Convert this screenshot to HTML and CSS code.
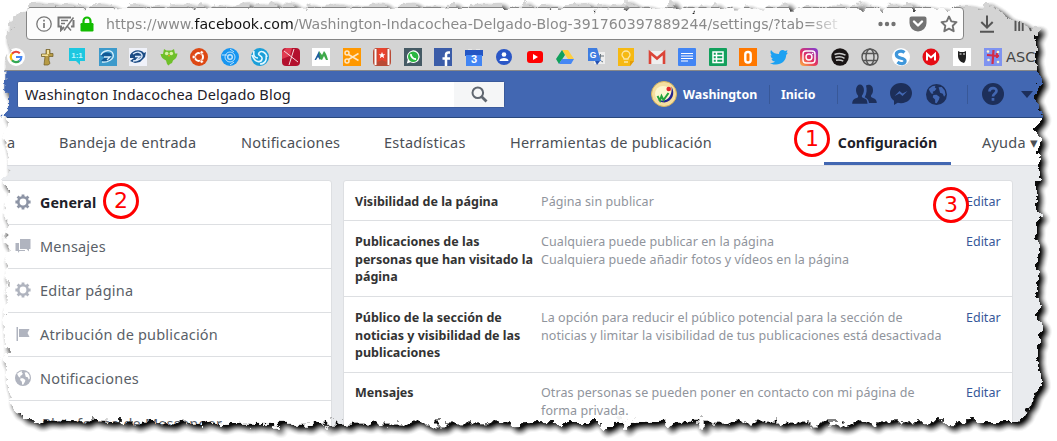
FILE: index.html
```html
<!DOCTYPE html>
<html lang="es">
<head>
<meta charset="utf-8">
<title>Configuración</title>
<link rel="stylesheet" href="styles.css">
</head>
<body>
<svg class="defs" width="0" height="0">
  <symbol id="gear" viewBox="0 0 16 16"><g fill="none" stroke="currentColor"><circle cx="8" cy="8" r="4.700" stroke-width="2.600"/><path stroke-width="2.800" d="M8 .4v3M8 12.600v3M.4 8h3M12.600 8h3M2.600 2.600l2 2M11.400 11.400l2 2M13.400 2.600l-2 2M4.600 11.400l-2 2"/></g></symbol>
  <symbol id="globe" viewBox="0 0 20 20"><circle cx="10" cy="10" r="10" fill="currentColor"/><path class="land" d="M2.600 4.800 6 2.200 9 1.600 8.400 3.400 10 4.600 8.200 6.600 6.400 7.400 7 9.400 5 9 3.600 7zM7 10.400l3-.2 3 2.200-.6 2.400-2.200 3.600-1.400-.4-.2-3.200L6.400 12.600zM12 3.200l3-.4 2.800 3.400.8 4-1.400 2-1.200-3-2.600-.8-.6-2.400z"/></symbol>
</svg>
<div class="screen">
  <header class="toolbar">
    <div class="urlbar">
      <svg width="16" height="16" viewBox="0 0 16 16" fill="none" stroke="#777"><circle cx="8" cy="8" r="7.200" stroke-width="1.300"/><path stroke-width="1.700" d="M8 7v5M8 3.700v1.800"/></svg>
      <svg width="18" height="16" viewBox="0 0 18 16" fill="none" stroke="#777" stroke-width="2"><path d="M14 1.500H1.500v9H4V14l3-3M16.500 4v6.500H14"/><path stroke-width="1.500" d="M4 4.500h7M4 7.500h4M16.500 1.500 7 14.500M10.500 10.500l3.500 4"/></svg>
      <svg width="14" height="16" viewBox="0 0 14 16"><path d="M3.500 8V5a3.500 3.500 0 0 1 7 0v3" fill="none" stroke="#12bc00" stroke-width="2.200"/><rect x=".5" y="7" width="13" height="8.500" rx="1.200" fill="#12bc00"/></svg>
      <div class="address">https://www.<b>facebook.com</b>/Washington-Indacochea-Delgado-Blog-391760397889244/settings/?tab=set</div>
      <svg class="dots" width="18" height="6" viewBox="0 0 18 6" fill="#737373"><circle cx="2.500" cy="3" r="2.200"/><circle cx="9" cy="3" r="2.200"/><circle cx="15.500" cy="3" r="2.200"/></svg>
      <svg class="pocket" width="18" height="16" viewBox="0 0 18 16"><path d="M2.500.5h13a2 2 0 0 1 2 2V7a8.500 8.500 0 0 1-17 0V2.500a2 2 0 0 1 2-2z" fill="#737373"/><path d="m5 5.500 4 4 4-4" fill="none" stroke="#fff" stroke-width="2.400" stroke-linecap="round" stroke-linejoin="round"/></svg>
      <svg width="18" height="18" viewBox="0 0 18 18"><path d="m9 1.500 2.300 4.900 5.200.7-3.800 3.700 1 5.400L9 13.600l-4.700 2.600 1-5.400L1.500 7.100l5.200-.7z" fill="none" stroke="#737373" stroke-width="1.900" stroke-linejoin="round"/></svg>
    </div>
    <svg class="download" width="16" height="18" viewBox="0 0 16 18" fill="none" stroke="#555" stroke-width="2"><path d="M8 .5v12M2.300 7 8 12.700 13.700 7M1 16.800h14"/></svg>
    <svg class="library" width="19" height="16" viewBox="0 0 19 16" fill="none" stroke="#555" stroke-width="1.900"><path d="M1.500 1v14M5.200 1v14M8.700 1v14M11.500 1l5.500 14"/></svg>
  </header>

  <nav class="bookmarks">
    <svg viewBox="0 0 18 18"><circle cx="9" cy="9" r="9" fill="#fff"/><g fill="none" stroke-width="2.200"><path d="M5 5.700A5.200 5.200 0 0 1 12.800 5.300" stroke="#ea4335"/><path d="M5 5.700a5.500 5.500 0 0 0 0 6.600" stroke="#fbbc05"/><path d="M5 12.300a5.200 5.200 0 0 0 7.500.6" stroke="#34a853"/><path d="M12.500 12.900A5 5 0 0 0 14.300 9H9" stroke="#4285f4"/></g></svg>
    <svg viewBox="0 0 18 18"><path d="M8 1.500h4v4h3v3h-4v4l1 3-2 1.500H6l1-8.500H3.500V6H8z" fill="#b79b45" stroke="#6d5a22" stroke-width=".7"/><path d="M9 2h2v4H9zM4 6.500h6V8H4z" fill="#f3e3a0"/></svg>
    <svg viewBox="0 0 18 18"><path d="M1 0h16v13h-5v4l-4-4H1z" fill="#1cc7e0"/><text x="9" y="9.500" class="glyph" font-size="8" fill="#bdf5fc">1:1</text></svg>
    <svg viewBox="0 0 18 18"><rect width="18" height="18" fill="#3d9acb"/><path d="M2 8c1-4 8-5 11-1l-2 5-4 2-5-1 4-4z" fill="#125a96"/><path d="M2 7c2-5 10-6 12-1s-6 9-11 8M5 9h6L8 12" stroke="#d9f0fb" stroke-width="1.300" fill="none"/></svg>
    <svg viewBox="0 0 18 18"><rect width="18" height="18" fill="#f0f2fa"/><path d="M1 7c3-6 11-6 14-2l2-1-1 5-5 5-5 1-5-2 4-3H1z" fill="#1c4c84"/><path d="M4 6c4-3 8-2 9 1s-4 6-9 6M6 8.500h5L7 12" stroke="#dceafb" stroke-width="1.300" fill="none"/></svg>
    <svg viewBox="0 0 18 18"><path d="M4 1l2.500 1.500h5L14 1l1 4.500 2.500 0c-.5 4-2 5.500-4.500 7l-1 2.500-2 1-1.500 1.500L7 16l-1-3.500C3 11 1 9.500.5 6H3z" fill="#6fc02a"/><circle cx="6.700" cy="5.500" r="1.800" fill="#d9f4a5"/><circle cx="11.300" cy="5.500" r="1.800" fill="#d9f4a5"/><path d="M8 7h2l-1 2z" fill="#f9a01b"/></svg>
    <svg viewBox="0 0 18 18"><circle cx="9" cy="9" r="9" fill="#dd4814"/><circle cx="9" cy="9" r="4" fill="none" stroke="#fff" stroke-width="2"/><g fill="#fff" stroke="#dd4814" stroke-width=".7"><circle cx="3.700" cy="9" r="1.700"/><circle cx="11.700" cy="4.400" r="1.700"/><circle cx="11.700" cy="13.600" r="1.700"/></g></svg>
    <svg viewBox="0 0 18 18"><circle cx="9" cy="9" r="9" fill="#1795f0"/><g fill="none" stroke="#bce2fd"><circle cx="9" cy="9" r="5"/><circle cx="9" cy="9" r="2.300" stroke-width="1.500"/><path d="M1 7h5M9 1l4 3M9 17l4-3"/></g></svg>
    <svg viewBox="0 0 18 18"><circle cx="9" cy="9" r="9" fill="#1a9fd8"/><path d="M1 7c3 8 9 8 10 4S6 8 8 5s7-1 8 4M3 3c-1 5 1 7 4 7M9 16c5 0 7-4 6-8" fill="none" stroke="#e4f7ff" stroke-width="1.600"/></svg>
    <svg viewBox="0 0 18 18"><rect width="18" height="18" rx="4" fill="#b3102e"/><path d="M0 4 4 0h6L8 8l-8 3z" fill="#e03a50"/><path d="M12 1 7 17M2 3l14 11" stroke="#f6d9dd" stroke-width="1"/></svg>
    <svg viewBox="0 0 18 18"><rect width="18" height="18" fill="#fff"/><path d="M2.500 12 7 3l2 5-1 4-2-3-2 3z" fill="#1d5e9e"/><path d="M7 3l3 4 2-4c2 2 3 5 4 9h-2l-2-4-2 4-2-1z" fill="#3fa94a"/></svg>
    <svg viewBox="0 0 18 18"><rect width="18" height="18" fill="#ff9800"/><g fill="none" stroke="#ffe7c2" stroke-width="1.500"><circle cx="4" cy="5" r="2"/><circle cx="4" cy="13" r="2"/><path d="m5.500 6.500 10 6M5.500 11.500l10-6"/></g></svg>
    <svg viewBox="0 0 18 18"><rect width="18" height="18" rx="4" fill="#b94a35"/><path d="M2.500 1v16M15.500 1v16" stroke="#fff" stroke-width="2"/><path d="M4.500 0h9v14l-4.500-2-4.500 2z" fill="#e8432d"/><path d="m9 4 1 2.300h2.300l-1.800 1.500.7 2.400L9 8.800l-2.200 1.400.7-2.400-1.800-1.500H8z" fill="#fff"/></svg>
    <svg viewBox="0 0 18 18"><rect width="18" height="18" fill="#455a64"/><path d="m2.800 15.500 1-3.800a6.300 6.300 0 1 1 2.500 2.500z" fill="#fff"/><circle cx="9.200" cy="8.700" r="5.200" fill="#2cb742"/><path d="M7 6c-.6 2.500 2.500 5.500 5 5" fill="none" stroke="#fff" stroke-width="1.900"/></svg>
    <svg viewBox="0 0 18 18"><rect width="18" height="18" fill="#3b5ca8"/><path d="M12 18v-8M8.500 10.500H16M12 11V7q0-2.500 2.500-2.500H16" fill="none" stroke="#fff" stroke-width="2.500"/></svg>
    <svg viewBox="0 0 18 18"><path d="M0 2h18v6H0z" fill="#2456c4"/><path d="M1 7h16v11H1z" fill="#4285f4"/><path d="M3 1.500h4M11 1.500h4" stroke="#e8e8e8"/><text x="9" y="14.500" class="glyph" font-size="11" fill="#fff">3</text></svg>
    <svg viewBox="0 0 18 18"><circle cx="9" cy="9" r="8" fill="#2a56c6"/><circle cx="9" cy="6.500" r="2.300" fill="#fff"/><path d="M4.500 13c0-4 9-4 9 0z" fill="#fff"/></svg>
    <svg viewBox="0 0 18 18"><rect x="1" y="3" width="16" height="12" rx="3" fill="#f00"/><path d="m7 6 5 3-5 3z" fill="#fff"/></svg>
    <svg viewBox="0 0 18 18"><path d="M6 2h6l6 9h-6z" fill="#ffcf3f"/><path d="m6 2 3 5-6 9-3-5z" fill="#11a05b"/><path d="M6 11h12l-3 5H3z" fill="#4687f4"/></svg>
    <svg viewBox="0 0 18 18"><rect x="7" y="4" width="11" height="12" fill="#eee"/><path d="M10 8h7M13.500 6v2c0 3-1 4-3 6M11 9c1 3 3 4 5 5" stroke="#6b7780" fill="none"/><path d="M1 0h9l4 13H1z" fill="#3f7de0"/><path d="m8 13 5 0-3 4z" fill="#234fb0"/><text x="6" y="9.500" class="glyph" font-size="8.500" fill="#fff">G</text></svg>
    <svg viewBox="0 0 18 18"><path d="M1 0h16v13l-4 5H1z" fill="#f6b913"/><path d="M13 18v-5h4z" fill="#e39b06"/><path d="M7 11c0-2-2-2-2-4a4 4 0 0 1 8 0c0 2-2 2-2 4zM7 14h4" stroke="#fde7a6" stroke-width="1.300" fill="none"/></svg>
    <svg viewBox="0 0 18 18"><path d="M1 3h16v13H1z" fill="#efefef"/><path d="M2 16V4.500l7 6 7-6V16" fill="none" stroke="#db4437" stroke-width="2.600"/></svg>
    <svg viewBox="0 0 18 18"><rect width="18" height="18" rx="1" fill="#4285f4"/><path d="M3 5.500h12M3 8h12M3 10.500h12M3 13h7" stroke="#fff" stroke-width="1.100"/></svg>
    <svg viewBox="0 0 18 18"><rect width="18" height="18" rx="1" fill="#12a05c"/><path d="M4 4h10v10.500H4zM4 7.500h10M4 11h10M7.500 4v10" fill="none" stroke="#fff" stroke-width="1.500"/></svg>
    <svg viewBox="0 0 18 18"><rect width="18" height="18" fill="#ff7800"/><rect x="6.300" y="4" width="5.400" height="10.500" rx="2.500" fill="none" stroke="#fff" stroke-width="2.400"/></svg>
    <svg viewBox="0 0 18 18"><path d="M1 2c2 3 5 4 8 4 0-4 4-5 6-3l2.500-.8L16.500 5 18 4.800 16.200 7C16 13 11 17 5 16.500c-2 0-4-.7-5-1.500 2 0 4-.5 5-1.500-2 0-3-1-3.500-2.500H3C1.500 10 .5 8.500.7 7L2 7.500C.5 6 0 4 1 2z" fill="#1da1f2"/></svg>
    <svg viewBox="0 0 18 18"><defs><linearGradient id="ig" x1="0" y1="1" x2=".8" y2="0"><stop offset="0" stop-color="#fdb643"/><stop offset=".5" stop-color="#e4315f"/><stop offset="1" stop-color="#8a3ac8"/></linearGradient></defs><rect width="18" height="18" rx="4" fill="url(#ig)"/><g fill="none" stroke="#fff" stroke-width="1.400"><rect x="3" y="3" width="12" height="12" rx="3"/><circle cx="9" cy="9" r="3"/></g><circle cx="12.500" cy="5.500" r=".8" fill="#fff"/></svg>
    <svg viewBox="0 0 18 18"><circle cx="9" cy="9" r="8.700" fill="#191414"/><path d="M3.500 6.500c4-1.500 8-1 11 .7M4.200 9.500c3-1 7-.7 9.300.8M5 12.300c3-.8 5-.4 7.300.8" stroke="#c9c9c9" stroke-width="1.500" fill="none"/></svg>
    <svg viewBox="0 0 18 18" fill="none" stroke="#555" stroke-width="1.400"><circle cx="9" cy="9" r="8"/><ellipse cx="9" cy="9" rx="4" ry="8"/><path d="M2 5.500h14M2 12.500h14"/></svg>
    <svg viewBox="0 0 18 18"><circle cx="9" cy="9" r="9" fill="#fff"/><path d="M12.500 4.500C9 1.500 3.500 4 4.500 7.500s8 2 8.500 5-4 4.500-7.500 1.500" fill="none" stroke="#3f97db" stroke-width="3.200"/></svg>
    <svg viewBox="0 0 18 18"><circle cx="9" cy="9" r="8.500" fill="#e60b14"/><path d="M5 12.500V6l4 3.500L13 6v6.500" fill="none" stroke="#fff" stroke-width="2"/></svg>
    <svg viewBox="0 0 18 18"><rect width="18" height="18" fill="#fff"/><path d="m5 3 2 1h4l2-1v6c0 3-1 5-2 6-4-1-6-4-6-7z" fill="#222"/><path d="M6.500 6h2M10 6h2" stroke="#fff" stroke-width="1.200"/></svg>
    <svg viewBox="0 0 18 18"><rect width="18" height="18" fill="#7f93f0"/><path d="M9.500 2l-1 14M3 7l12 1M13 5v5" stroke="#d32d4a" stroke-width="2.200"/><g fill="#fff3c8"><circle cx="4" cy="3.500" r="1.300"/><circle cx="14" cy="4" r="1.300"/><circle cx="4.500" cy="12" r="1.300"/><circle cx="14" cy="14" r="1.300"/></g></svg>
    <span class="bookmark-label">ASCO</span>
  </nav>

  <div class="bluebar">
    <div class="search"><span class="query">Washington Indacochea Delgado Blog</span><span class="search-btn"><svg width="17" height="17" viewBox="0 0 17 17" fill="none" stroke="#606770"><circle cx="6.800" cy="6.800" r="5.300" stroke-width="2"/><path stroke-width="2.800" d="m10.700 10.700 4.800 4.800"/></svg></span></div>
    <svg class="avatar" width="26" height="26" viewBox="0 0 26 26"><circle cx="13" cy="13" r="12.500" fill="#f5dfa0" stroke="#d9b45a"/><circle cx="12" cy="13" r="8" fill="#fdf6cf"/><path d="M20.500 5.500c4 7 1 15-7 16-3 0-5-1-7-3 5 2 10 1 12.500-3.500 1.500-3 2-6 1.500-9.500z" fill="#25248f"/><path d="m6.500 15 2.500 4.500 1.500-4.500 2 4 5-7" fill="none" stroke="#23a33a" stroke-width="2"/><circle cx="17.700" cy="8" r="2.300" fill="#e3262b"/></svg>
    <span class="user">Washington</span><i class="sep"></i><span class="home">Inicio</span><i class="sep"></i>
    <svg class="friends" width="25" height="20" viewBox="0 0 25 20" fill="#1d2f5a"><path d="M11.500 14c-1.500-.5-2-1-1.500-2.500 3.500-4 2-11-2-11S2.500 7.500 6 11.500c.5 1.500 0 2-2 2.700-2.500.8-3.500 2-3.800 5.600h15.300c-.3-3.800-1-4.800-4-5.800z"/><path d="M14 1.500C16 0 21 0 21 6c0 2.500-.7 4-2 5.500-.2 1.400.2 2 2 2.500 2.600.8 3.600 2 3.800 5H17c-.4-3-1.500-4.700-4.300-5.800 2.300-4 2.300-8 1.300-11.700z"/></svg>
    <svg class="messenger" width="22" height="22" viewBox="0 0 22 22"><path d="M11 0C4.500 0 0 4.600 0 10c0 3.300 1.500 6 4 7.700V22l3.700-2.200c1 .3 2.200.4 3.300.4 6.500 0 11-4.500 11-10.100S17.500 0 11 0z" fill="#1d2f5a"/><path d="m4.500 13 5-5 3 2.500L17.500 8l-5 5-3-2.500z" fill="#4267b2"/></svg>
    <svg class="world" width="21" height="21"><use href="#globe"/></svg>
    <i class="sep sep3"></i>
    <svg class="help" width="22" height="22" viewBox="0 0 22 22"><circle cx="11" cy="11" r="11" fill="#1d2f5a"/><path d="M7.500 8.500c0-4.500 7-4.500 7-.5 0 2.500-3.500 2.500-3.500 5.500M11 15v2.700" fill="none" stroke="#4267b2" stroke-width="2.700"/></svg>
    <svg class="caret" width="12" height="7" viewBox="0 0 12 7"><path d="M0 0h12L6 7z" fill="#1d2f5a"/></svg>
  </div>

  <nav class="tabs">
    <span class="tab">a</span><span class="tab">Bandeja de entrada</span><span class="tab">Notificaciones</span><span class="tab">Estadísticas</span><span class="tab">Herramientas de publicación</span><span class="tab active">Configuración</span><span class="tab">Ayuda ▾</span>
  </nav>

  <main class="content">
    <aside class="side">
      <div class="item current"><svg width="16" height="16"><use href="#gear"/></svg>General</div>
      <div class="item"><svg width="16" height="16" viewBox="0 0 16 16" fill="currentColor"><path d="M5 1h10.500v10H14v2.500L11.500 11H5z"/><path d="M.5 5H4v7h6v1H4.500L3 15v-2H.5z"/></svg>Mensajes</div>
      <div class="item"><svg width="16" height="16"><use href="#gear"/></svg>Editar página</div>
      <div class="item"><svg width="16" height="16" viewBox="0 0 16 16" fill="currentColor"><path d="M1.500 1H3v14H1.500zM4 3h10.500l-2 4 2 4H4z"/></svg>Atribución de publicación</div>
      <div class="item pale"><svg width="16" height="16"><use href="#globe"/></svg>Notificaciones</div>
      <div class="item last">Plataforma de Messenger</div>
    </aside>
    <section class="panel">
      <div class="row r1"><b>Visibilidad de la página</b><p>Página sin publicar</p><a>Editar</a></div>
      <div class="row"><b>Publicaciones de las<br>personas que han visitado la<br>página</b><p>Cualquiera puede publicar en la página<br>Cualquiera puede añadir fotos y vídeos en la página</p><a>Editar</a></div>
      <div class="row"><b>Público de la sección de<br>noticias y visibilidad de las<br>publicaciones</b><p>La opción para reducir el público potencial para la sección de<br>noticias y limitar la visibilidad de tus publicaciones está desactivada</p><a>Editar</a></div>
      <div class="row r4"><b>Mensajes</b><p>Otras personas se pueden poner en contacto con mi página de<br>forma privada.</p><a>Editar</a></div>
    </section>
  </main>

  <!-- torn paper border with its shadow -->
  <svg class="torn" width="1057" height="441" viewBox="0 0 1057 441">
    <defs><filter id="tear" filterUnits="userSpaceOnUse" x="-30" y="-30" width="1117" height="501" color-interpolation-filters="sRGB">
      <feTurbulence type="fractalNoise" baseFrequency=".09" numOctaves="5" seed="12" result="n"/>
      <feDisplacementMap in="SourceGraphic" in2="n" scale="19" xChannelSelector="R" yChannelSelector="G" result="d"/>
      <feGaussianBlur in="d" stdDeviation=".7" result="f"/>
      <feComponentTransfer in="f" result="inv"><feFuncA type="linear" slope="-1" intercept="1"/></feComponentTransfer>
      <feOffset in="inv" dx="4" dy="4"/><feGaussianBlur stdDeviation="3.400"/>
      <feColorMatrix values="0 0 0 0 .05  0 0 0 0 .05  0 0 0 0 .05  0 0 0 1.250 -.04" result="s"/>
      <feComposite in="s" in2="f" operator="in" result="sh"/>
      <feMerge><feMergeNode in="f"/><feMergeNode in="sh"/></feMerge>
    </filter></defs>
    <path filter="url(#tear)" fill="#fff" fill-rule="evenodd" d="M-30-30h1117v501H-30zM35 5 7 24 5 180 6 395 26 420 200 424 600 423 1016 422 1038 395 1038 30 990 7z"/>
  </svg>
  <span class="mark m1">1</span><span class="mark m2">2</span><span class="mark m3">3</span>
</div>
</body>
</html>
```
FILE: styles.css
```css
* { box-sizing: border-box; }
body { margin: 0; background: #fff; font-family: "Noto Sans", sans-serif; }
svg { display: block; flex: none; }
.defs { position: absolute; }
.screen { position: relative; width: 1057px; height: 441px; overflow: hidden; background: #e9ebee; }
.toolbar { display: flex; height: 44px; padding: 7px 0 0 26px; background: #d4d4d4; }
.urlbar { display: flex; align-items: center; width: 938px; height: 33px; padding: 0 6px 0 9px; background: #fcfcfc; border: 1px solid #858585; border-radius: 4px; }
.urlbar svg { margin-right: 5px; }
.address { flex: none; width: 772px; margin-left: 7px; font: 14.13px "DejaVu Sans", sans-serif; color: #8a8a8a; white-space: nowrap; overflow: hidden; -webkit-mask-image: linear-gradient(90deg, #000 700px, transparent 740px); mask-image: linear-gradient(90deg, #000 700px, transparent 740px); }
.address b { font-weight: 400; color: #111; }
.urlbar .dots, .urlbar .pocket { margin-right: 13px; }
.download { margin: 8px 0 0 15px; }
.library { margin: 9px 0 0 19px; }
.bookmarks { display: flex; align-items: center; gap: 12.53px; height: 27px; padding: 0 0 1px 7px; background: #d4d4d4; border-bottom: 1px solid #888; }
.bookmarks svg { width: 18px; height: 18px; }
.bookmark-label { margin-left: -8px; font: 14.5px "DejaVu Sans", sans-serif; color: #444; }
.glyph { font-family: "Liberation Sans", sans-serif; font-weight: 700; text-anchor: middle; }
.bluebar { display: flex; align-items: center; height: 47px; padding-left: 17px; background: #4267b2; border-bottom: 1px solid #29487d; color: #fff; font-size: 12.4px; font-weight: 700; }
.search { display: flex; align-items: center; width: 488px; height: 27px; background: #fff; border: 1px solid #3a5a9b; border-radius: 2px; }
.query { flex: 1; padding-left: 7px; font-size: 14.5px; font-weight: 400; letter-spacing: .17px; color: #1d2129; white-space: nowrap; }
.search-btn { display: flex; align-items: center; justify-content: center; width: 50px; height: 25px; background: #f5f6f7; }
.avatar { margin-left: 146px; }
.user { width: 92px; padding-left: 6px; }
.sep { width: 1px; height: 19px; background: #385898; }
.home { width: 67px; padding-left: 11px; }
.friends { margin-left: 14px; }
.messenger { margin-left: 13px; }
.world { margin-left: 14px; color: #1d2f5a; }
.sep3 { margin-left: 20px; }
.help { margin-left: 14px; }
.caret { margin-left: 17px; }
.land { fill: var(--land, #4267b2); }
.tabs { display: grid; grid-template-columns: 59px 182px 143px 126px 314px 127px 106px; height: 48px; background: #fff; border-bottom: 1px solid #d8dadf; font-size: 14.5px; letter-spacing: .22px; color: #4b4f56; line-height: 49px; white-space: nowrap; }
.tab:first-child { padding-left: 7px; }
.tab:last-child { padding-left: 31px; }
.active { height: 47px; font-weight: 700; font-size: 14.2px; letter-spacing: 0; color: #1d2129; text-align: center; border-bottom: 3px solid #4267b2; }
.content { display: flex; gap: 11px; padding-top: 14px; height: 275px; }
.side, .panel { background: #fff; border: 1px solid #dddfe2; border-radius: 3px; }
.side { width: 332px; padding-left: 7px; }
.item { display: flex; align-items: center; gap: 9px; height: 44px; padding: 0 0 1px 7px; border-bottom: 1px solid #dddfe2; font-size: 14.5px; letter-spacing: .2px; color: #5a5f68; white-space: nowrap; }
.item svg { color: #b0b4bf; }
.item.current { font-size: 14.3px; font-weight: 700; color: #1d2129; letter-spacing: .1px; }
.item.current svg { color: #8d94a5; }
.pale { --land: #fff; }
.item.last { padding-left: 34px; border: 0; }
.panel { width: 670px; font-size: 12.5px; line-height: 17.6px; }
.row { display: grid; grid-template-columns: 186px 425px 40px; padding: 12px 0 11px 11px; border-bottom: 1px solid #dddfe2; height: 76px; white-space: nowrap; color: #90949c; }
.r1 { height: 40px; }
.r4 { padding-top: 11px; border: 0; }
.row b { color: #333; font-size: 12.5px; }
.row p { margin: 0; letter-spacing: .08px; }
.row a { color: #365899; }
.torn { position: absolute; inset: 0; }
.mark { position: absolute; width: 36px; height: 36px; border: 3px solid #f00; border-radius: 50%; color: #f00; font: 22px/29px "DejaVu Sans", sans-serif; text-align: center; }
.m1 { left: 794px; top: 121px; }
.m2 { left: 103px; top: 183px; }
.m3 { left: 933px; top: 187px; }
```
